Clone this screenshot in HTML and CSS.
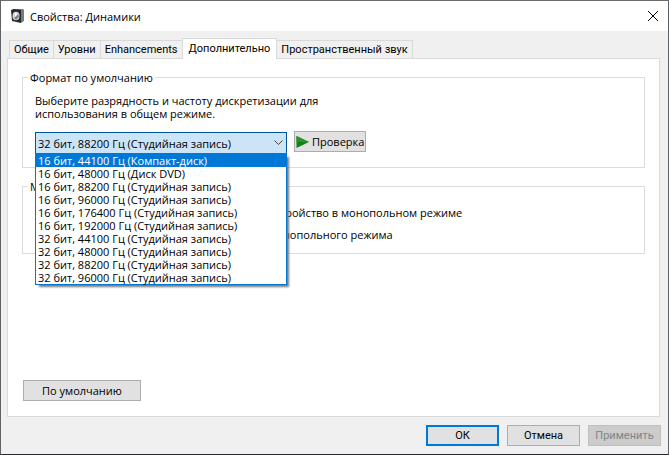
FILE: index.html
```html
<!DOCTYPE html>
<html lang="ru">
<head>
<meta charset="utf-8">
<title>Свойства: Динамики</title>
<link rel="stylesheet" href="styles.css">
</head>
<body>
<main class="window">
  <header class="titlebar">
    <svg class="app-icon" viewBox="0 0 13 14" aria-hidden="true">
      <path d="M3 0h9l1 1v11l-3 2V2H1z" fill="#777b7e"/>
      <path d="M0 1l3-1 7 1v13l-9-2z" fill="#26292b"/>
      <ellipse cx="5" cy="7" rx="3.5" ry="4.2" fill="#d5dadd"/>
      <path d="M3 9l4-5 1 4-3 3z" fill="#7d8588"/>
      <path d="M4 4l3 1-3 3z" fill="#fff"/>
    </svg>
    <h1 class="title">Свойства: Динамики</h1>
    <button class="close" type="button" aria-label="Закрыть">
      <svg viewBox="0 0 10 10" aria-hidden="true"><path d="M0 0l10 10M10 0L0 10" stroke="#000" fill="none"/></svg>
    </button>
  </header>
  <div class="body">
    <nav class="tabs" role="tablist">
      <button class="tab" type="button" role="tab">Общие</button>
      <button class="tab" type="button" role="tab">Уровни</button>
      <button class="tab" type="button" role="tab">Enhancements</button>
      <button class="tab active" type="button" role="tab" aria-selected="true">Дополнительно</button>
      <button class="tab" type="button" role="tab">Пространственный звук</button>
    </nav>
    <section class="panel">
      <fieldset class="group format">
        <legend>Формат по умолчанию</legend>
        <label class="hint" for="format">Выберите разрядность и частоту дискретизации для<br>использования в общем режиме.</label>
        <div class="row">
          <div class="combo">
            <select class="select" id="format">
              <option>32 бит, 88200 Гц (Студийная запись)</option>
            </select>
            <svg class="chevron" viewBox="0 0 9 5" aria-hidden="true"><path d="M.5 .5l4 4 4-4" stroke="#444" fill="none"/></svg>
            <ul class="list" role="listbox" aria-label="Формат">
              <li class="item selected" role="option" aria-selected="true">16 бит, 44100 Гц (Компакт-диск)</li>
              <li class="item" role="option">16 бит, 48000 Гц (Диск DVD)</li>
              <li class="item" role="option">16 бит, 88200 Гц (Студийная запись)</li>
              <li class="item" role="option">16 бит, 96000 Гц (Студийная запись)</li>
              <li class="item" role="option">16 бит, 176400 Гц (Студийная запись)</li>
              <li class="item" role="option">16 бит, 192000 Гц (Студийная запись)</li>
              <li class="item" role="option">32 бит, 44100 Гц (Студийная запись)</li>
              <li class="item" role="option">32 бит, 48000 Гц (Студийная запись)</li>
              <li class="item" role="option">32 бит, 88200 Гц (Студийная запись)</li>
              <li class="item" role="option">32 бит, 96000 Гц (Студийная запись)</li>
            </ul>
          </div>
          <button class="button test" type="button">
            <svg class="play" viewBox="0 0 13 12" aria-hidden="true"><path d="M.5 0l12.500 6-12.500 6z" fill="#158015"/><path d="M.5 0l12.500 6H.5z" fill="#2c942c"/></svg>
            Проверка
          </button>
        </div>
      </fieldset>
      <fieldset class="group exclusive">
        <legend>Монопольный режим</legend>
        <label class="check"><input type="checkbox" checked>Разрешить приложениям использовать устройство в монопольном режиме</label>
        <label class="check"><input type="checkbox" checked>Предоставить приоритет приложениям монопольного режима</label>
      </fieldset>
      <button class="button defaults" type="button">По умолчанию</button>
    </section>
    <footer class="actions">
      <button class="button primary" type="button">ОК</button>
      <button class="button" type="button">Отмена</button>
      <button class="button" type="button" disabled>Применить</button>
    </footer>
  </div>
</main>
</body>
</html>
```
FILE: styles.css
```css
* { box-sizing: border-box; }

body {
  margin: 0;
  font: 11px/13px "Open Sans", "Noto Sans", sans-serif;
  color: #000;
}

button, select { font: inherit; color: inherit; }

.window {
  display: flex;
  flex-direction: column;
  min-height: 100vh;
  border: 1px solid #5f6264;
  border-top-color: #6b6b6b;
  border-bottom-color: #2a2a2c;
  background: #fff;
}

.titlebar {
  display: flex;
  align-items: center;
  height: 30px;
  padding: 0 10px;
}

.app-icon { width: 13px; height: 14px; }

.title {
  flex: 1;
  margin: 0 0 0 6px;
  font-size: 11px;
  font-weight: 400;
}

.close {
  display: flex;
  padding: 0;
  border: 0;
  background: none;
}

.close svg { width: 10px; height: 10px; }

.body {
  flex: 1;
  display: flex;
  flex-direction: column;
  padding: 7px 7px 8px 6px;
  background: #f0f0f0;
}

.tabs {
  display: flex;
  align-items: flex-end;
  height: 20px;
  padding-left: 2px;
}

.tab {
  height: 18px;
  margin-right: -1px;
  padding: 0 4px;
  border: 1px solid #d9d9d9;
  border-bottom: 0;
  background: #f0f0f0;
  font-family: Roboto, "Open Sans", sans-serif;
  white-space: nowrap;
}

.active {
  position: relative;
  height: 21px;
  margin-bottom: -1px;
  padding: 0 6px 2px;
  background: #fff;
}

.panel {
  flex: 1;
  margin-right: 1px;
  padding: 12px 14px 14px;
  border: 1px solid #d9d9d9;
  background: #fff;
}

.group {
  min-width: 0;
  margin: 0;
  padding: 0 12px;
  border: 1px solid #dcdcdc;
}

.group legend {
  margin-left: -7px;
  padding: 0 2px;
}

.format { height: 97px; }

.exclusive {
  height: 74px;
  margin-top: 12px;
}

.hint {
  display: block;
  margin-top: 10px;
}

.row {
  display: flex;
  gap: 7px;
  margin-top: 11px;
}

.combo {
  position: relative;
  width: 252px;
}

.select {
  display: block;
  width: 100%;
  height: 22px;
  margin-top: 1px;
  padding: 0 2px;
  border: 1px solid #005499;
  border-radius: 0;
  background: #cce4f7;
  appearance: none;
}

.chevron {
  position: absolute;
  top: 9px;
  right: 4px;
  width: 9px;
  height: 5px;
}

.list {
  position: absolute;
  z-index: 1;
  top: 22px;
  left: 0;
  width: 100%;
  margin: 0;
  padding: 0;
  border: 1px solid #0078d7;
  background: #fff;
  box-shadow: 3px 3px 2px -1px #777;
  list-style: none;
}

.item {
  height: 13px;
  padding-left: 2px;
}

.selected { background: #0078d7; color: #fff; }

.button {
  height: 21px;
  padding: 0;
  border: 1px solid #adadad;
  background: #e1e1e1;
}

.test {
  display: flex;
  align-items: center;
  gap: 3px;
  padding: 0 1px;
  white-space: nowrap;
}

.play { width: 13px; height: 12px; }

.check {
  display: flex;
  align-items: center;
  gap: 3px;
  margin-top: 9px;
  white-space: nowrap;
}

.exclusive legend + .check { margin-top: 13px; }

.check input {
  width: 13px;
  height: 13px;
  margin: 0;
}

.defaults {
  width: 118px;
  margin: 126px 0 0 1px;
}

.actions {
  display: flex;
  justify-content: flex-end;
  gap: 8px;
  margin-top: 8px;
}

.actions .button {
  width: 73px;
  font-family: Roboto, "Open Sans", sans-serif;
}

.actions .primary { border: 2px solid #0078d7; }

.button:disabled {
  border-color: #bfbfbf;
  background: #ccc;
  color: #838383;
}
```
